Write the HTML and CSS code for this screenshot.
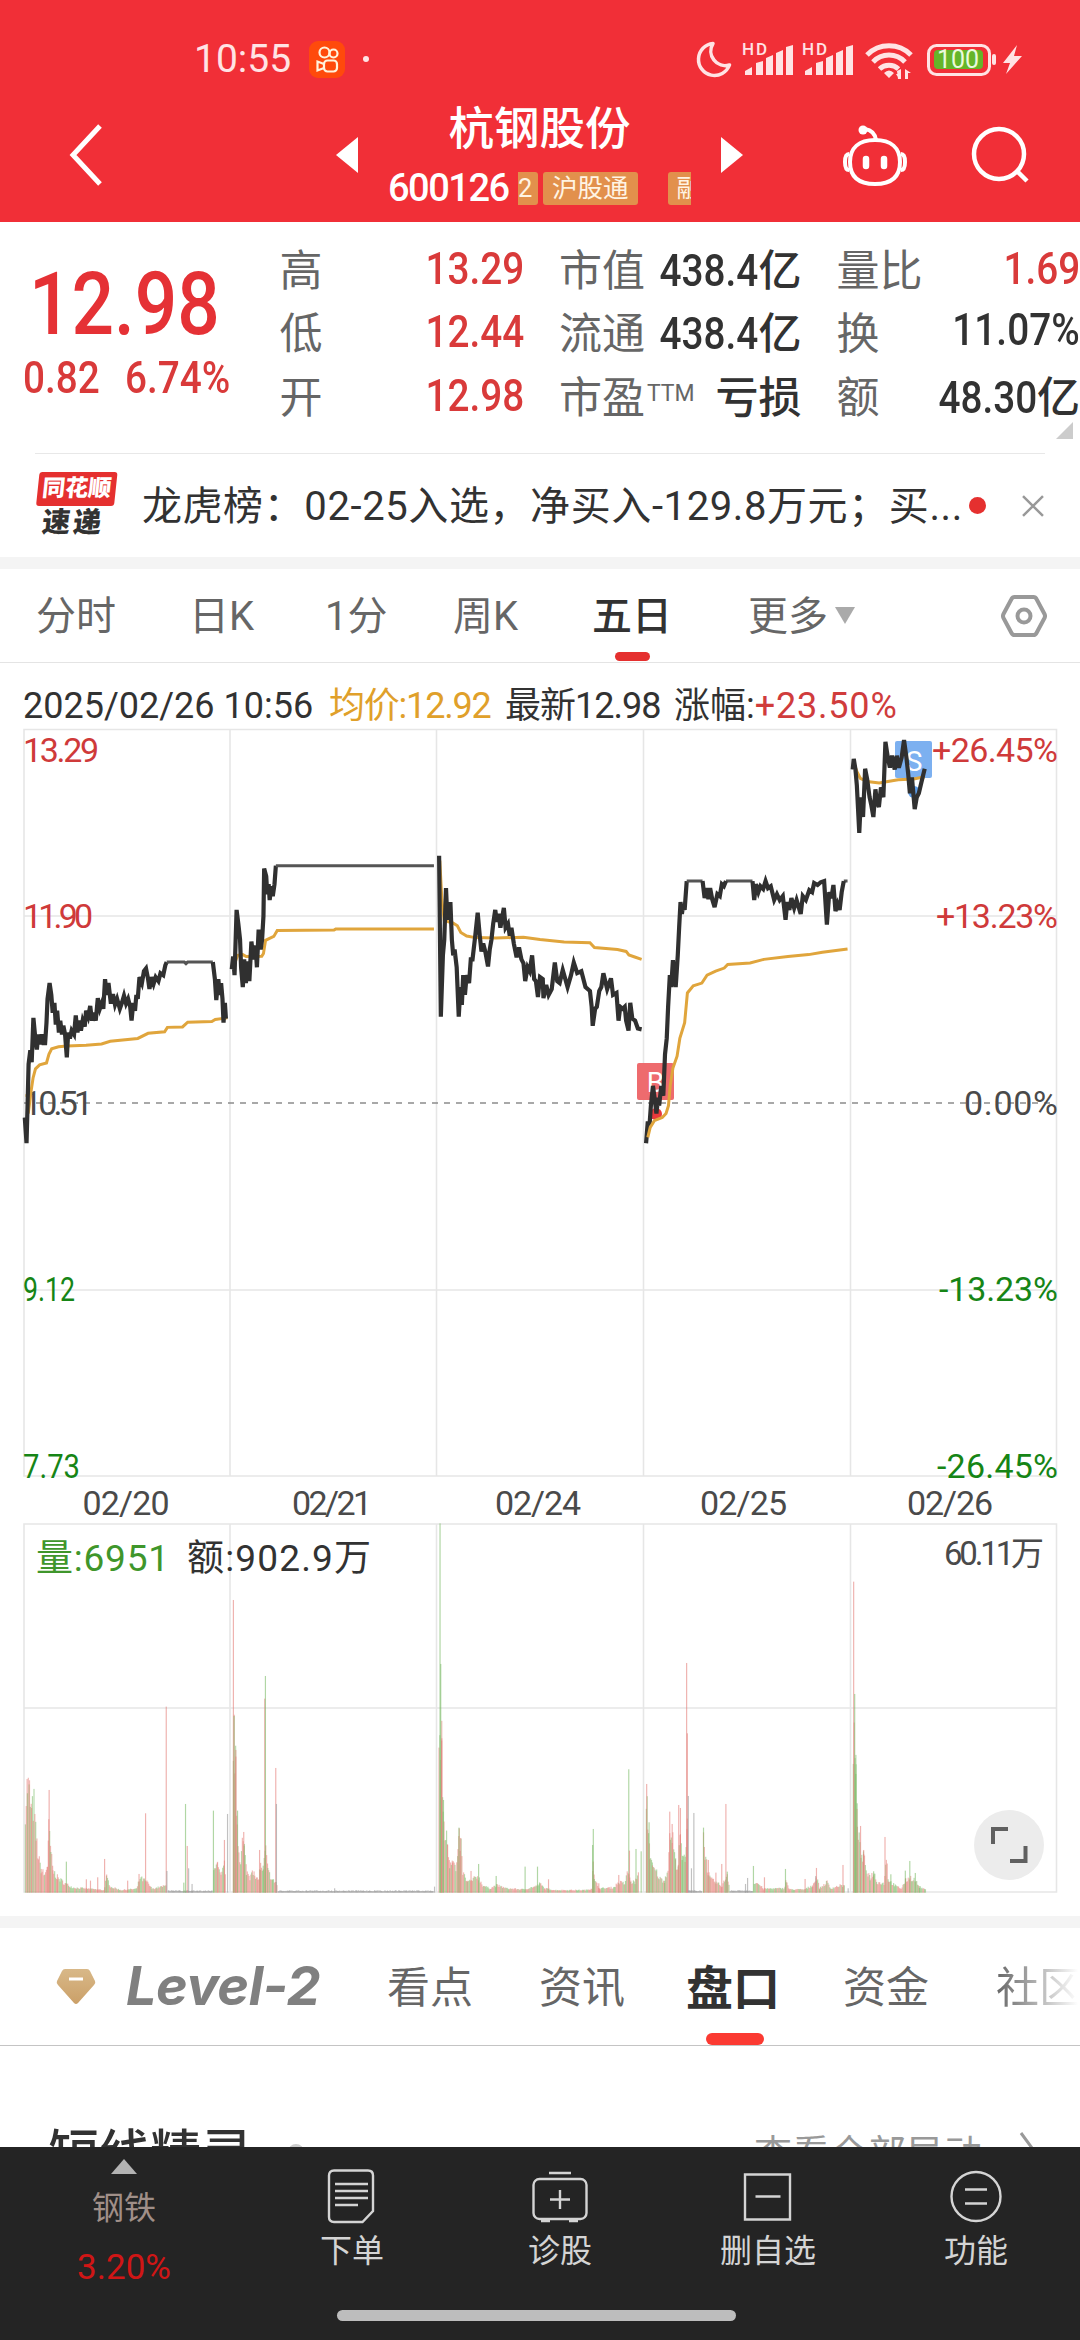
FILE: index.html
```html
<!DOCTYPE html>
<html lang="zh-CN">
<head>
    <meta charset="UTF-8">
    <meta name="viewport" content="width=device-width, initial-scale=1.0">
    <title>杭钢股份 600126</title>
    <link rel="stylesheet" href="styles.css">
</head>
<body>
    <header class="header">
        <div class="status-bar">
            <span class="clock">10:55</span>
            <svg class="app-icon" width="36" height="37" viewBox="0 0 36 37">
                <rect width="36" height="37" rx="9" fill="#ff4a0c"/>
                <g fill="none" stroke="#fff3dc" stroke-width="2.2">
                    <circle cx="15.5" cy="11.5" r="5"/>
                    <circle cx="24.5" cy="12.5" r="4"/>
                    <rect x="15" y="19.5" width="13" height="11" rx="3.5"/>
                    <path d="M15 23l-6.500-2.500v9l6.500-2.500"/>
                </g>
            </svg>
            <span class="dot"></span>
            <svg class="status-icons" width="330" height="42" viewBox="696 38 330 42" fill="#ffe3e4">
                <path d="M713 43.500a16 16 0 1 0 16.500 21.500a14.500 14.500 0 0 1-16.500-21.500z" fill="none" stroke="#ffe3e4" stroke-width="3.500" stroke-linejoin="round"/>
                <g id="signal">
                    <text class="hd" x="742" y="55" textLength="25">HD</text>
                    <path d="M745 75v-4l7-4v8zM756 75V63l7-2v14zM766 75V58l7-3v20zM776 75V53l7-3v25zM786 75V47l7-2v30z"/>
                </g>
                <use href="#signal" x="60"/>
                <g fill="none" stroke="#ffe3e4" stroke-width="5">
                    <path d="M867 55a31 31 0 0 1 44 0M873 62a22 22 0 0 1 32 0M879.500 69a14 14 0 0 1 19 0"/>
                </g>
                <path d="M884 73q5-5 10 0l-5 5zM897 71l4-2v10h-3zM905 79V69l6 4h-3v6zM896 74h3v5z"/>
                <rect x="928.500" y="45.500" width="61" height="29" rx="8" fill="none" stroke="#ffe3e4" stroke-width="3"/>
                <rect x="934" y="50" width="49" height="19" rx="4" fill="#65b529"/>
                <text class="battery" x="937" y="68" textLength="42">100</text>
                <rect x="992" y="54" width="4" height="11" rx="2"/>
                <path d="M1017 45l-14 18h7l-4 11 16-18h-8z"/>
            </svg>
        </div>
        <div class="title-bar">
            <svg class="back" width="34" height="64" viewBox="0 0 34 64"><path d="M31 3L4 32l27 29" fill="none" stroke="#fff" stroke-width="5"/></svg>
            <svg width="22" height="36" viewBox="0 0 22 36"><path d="M22 0v36L0 18z" fill="#fff"/></svg>
            <div class="stock">
                <h1>杭钢股份</h1>
                <div class="stock-sub">
                    <span class="code">600126</span>
                    <div class="tags"><span class="tag tag-cut">2</span><span class="tag">沪股通</span><span class="tag tag-last">融</span></div>
                </div>
            </div>
            <svg width="22" height="36" viewBox="0 0 22 36"><path d="M0 0v36l22-18z" fill="#fff"/></svg>
            <svg class="robot" width="66" height="62" viewBox="0 0 66 62" fill="none" stroke="#fff" stroke-width="4">
                <path d="M34 16c-1-7-5-10-11-11"/>
                <circle cx="21" cy="6" r="4.500" fill="#fff" stroke="none"/>
                <path d="M33 16c16 0 25 8 25 22 0 15-9 22-25 22S8 53 8 38C8 24 17 16 33 16z"/>
                <path d="M7 30q-4 0-4 8t4 8M59 30q4 0 4 8t-4 8"/>
                <path d="M24 35v7M42 35v7" stroke-width="6.500" stroke-linecap="round"/>
            </svg>
            <svg class="search" width="60" height="60" viewBox="0 0 60 60" fill="none" stroke="#fff" stroke-width="4.500"><circle cx="29" cy="29" r="25"/><path d="M47 46l10 10"/></svg>
        </div>
    </header>

    <section class="quote">
        <div class="price-box">
            <div class="price num">12.98</div>
            <div class="change"><span class="num">0.82</span><span class="num">6.74%</span></div>
        </div>
        <dl class="stats stats-a">
            <div><dt>高</dt><dd class="up"><span class="num">13.29</span></dd></div>
            <div><dt>低</dt><dd class="up"><span class="num">12.44</span></dd></div>
            <div><dt>开</dt><dd class="up"><span class="num">12.98</span></dd></div>
        </dl>
        <dl class="stats stats-b">
            <div><dt>市值</dt><dd><span class="num">438.4</span>亿</dd></div>
            <div><dt>流通</dt><dd><span class="num">438.4</span>亿</dd></div>
            <div><dt>市盈<sup>TTM</sup></dt><dd>亏损</dd></div>
        </dl>
        <dl class="stats stats-c">
            <div><dt>量比</dt><dd class="up"><span class="num">1.69</span></dd></div>
            <div><dt>换</dt><dd><span class="num">11.07%</span></dd></div>
            <div><dt>额</dt><dd><span class="num">48.30</span>亿</dd></div>
        </dl>
        <span class="expand-corner"></span>
    </section>

    <section class="news">
        <div class="news-logo"><b class="logo-top">同花顺</b><b class="logo-bottom">速递</b></div>
        <p>龙虎榜：02-25入选，净买入-129.8万元；买...</p>
        <span class="news-dot"></span>
        <svg width="24" height="24" viewBox="0 0 24 24"><path d="M2 2l20 20M22 2L2 22" stroke="#999" stroke-width="2.500"/></svg>
    </section>

    <nav class="period-tabs">
        <a>分时</a>
        <a>日K</a>
        <a>1分</a>
        <a>周K</a>
        <a class="active">五日</a>
        <a>更多<i class="caret"></i></a>
        <svg width="46" height="44" viewBox="0 0 46 44" fill="none" stroke="#999" stroke-width="4"><path d="M13.500 3h19q2 0 3 2l8 15q1 2 0 4l-8 15q-1 2-3 2h-19q-2 0-3-2l-8-15q-1-2 0-4l8-15q1-2 3-2z"/><circle cx="23" cy="22" r="6.500"/></svg>
    </nav>

    <section class="chart">
        <div class="chart-info">
            <span class="t-date">2025/02/26 10:56</span>
            <span class="t-avg">均价:12.92</span>
            <span class="t-last">最新12.98</span>
            <span class="t-rise">涨幅:<em>+23.50%</em></span>
        </div>
        <svg class="plot" width="1080" height="1188" viewBox="0 728 1080 1188">
            <!-- grid -->
            <g class="grid">
                <path d="M24 729.500H1056.500V1476H24zM24 916H1056M24 1290H1056"/>
                <path d="M230 729V1476M436.500 729V1476M643.500 729V1476M850.500 729V1476"/>
                <path d="M24 1524H1056.500V1892H24zM24 1708H1056"/>
                <path d="M230 1524V1892M436.500 1524V1892M643.500 1524V1892M850.500 1524V1892"/>
            </g>
            <path class="zero" d="M24 1103H1056"/>

            <g class="axis up">
                <text x="23" y="762" textLength="76">13.29</text>
                <text x="23" y="928" textLength="70">11.90</text>
                <text x="1058" y="762" text-anchor="end" textLength="126">+26.45%</text>
                <text x="1058" y="928" text-anchor="end" textLength="122">+13.23%</text>
            </g>
            <g class="axis">
                <text x="23" y="1115" textLength="70">10.51</text>
                <text x="1058" y="1115" text-anchor="end" textLength="94">0.00%</text>
            </g>
            <g class="axis down">
                <text x="23" y="1301" textLength="52" lengthAdjust="spacingAndGlyphs">9.12</text>
                <text x="23" y="1478" textLength="57" lengthAdjust="spacingAndGlyphs">7.73</text>
                <text x="1058" y="1301" text-anchor="end" textLength="119">-13.23%</text>
                <text x="1058" y="1478" text-anchor="end" textLength="121">-26.45%</text>
            </g>

            <!-- trade markers -->
            <g class="marker">
                <rect x="637" y="1063" width="37" height="37" rx="2" fill="#ee6b6e"/>
                <circle cx="656" cy="1114" r="6" fill="#e9393c"/>
                <text x="655.500" y="1092" text-anchor="middle">B</text>
                <rect x="895" y="741" width="37" height="37" rx="2" fill="#7cb0f0"/>
                <circle cx="914" cy="792" r="6" fill="#5d9de9"/>
                <text x="914" y="771" text-anchor="middle">S</text>
            </g>

            <!-- average and price lines -->
            <g transform="translate(0 560) scale(.3444 .3954)">
                <path class="avg" d="M82 1400L90 1345 96 1310 103 1287 115 1277 135 1272 142 1250 150 1236 170 1231 195 1229 250 1227 295 1224 320 1217 400 1210 430 1197 478 1193 486 1182 530 1181 545 1169 615 1167 625 1162 660 1158"/>
                <path class="avg" d="M677 1030L690 1000 705 998 715 1003 760 1002 765 995 771 962 795 952 805 937 970 936 975 933 1260 933"/>
                <path class="avg" d="M1277 760L1283 860 1290 912 1315 918 1328 925 1338 942 1355 951 1380 955 1440 956 1520 954 1568 960 1638 966 1713 968 1726 980 1793 985 1818 990 1826 999 1843 1004 1863 1010"/>
                <path class="price-line" d="M72 1410L77 1475 80 1380 83 1275 88 1240 92 1270 97 1158 102 1205 107 1238 111 1200 116 1225 121 1200 126 1222 131 1222 135 1170 138 1110 144 1070 149 1100 153 1145 158 1120 162 1175 166 1140 171 1195 175 1165 180 1200 184 1178 189 1200 194 1258 198 1195 203 1210 208 1190 215 1200 220 1152 225 1195 230 1165 235 1190 240 1165 246 1180 250 1140 256 1155 262 1128 267 1165 272 1145 278 1165 284 1108 290 1135 296 1120 300 1135 305 1060 310 1100 315 1070 322 1122 328 1098 334 1125 340 1110 348 1135 354 1120 360 1102 366 1122 372 1110 378 1130 382 1165 387 1120 392 1140 396 1100 400 1110 405 1055 412 1070 418 1040 424 1033 430 1060 434 1085 440 1055 446 1072 452 1055 460 1065 466 1045 474 1050 480 1025 484 1017"/>
                <path class="price-line flat" d="M484 1017H535L540 1021 545 1017H618"/>
                <path class="price-line" d="M618 1017L624 1060 628 1113 634 1060 638 1100 642 1070 646 1110 649 1170 653 1120 656 1160"/>
                <path class="price-line" d="M673 1035L677 1003 681 1050 687 885 692 920 697 960 700 1030 705 1080 709 1010 714 1070 718 1015 724 1065 730 965 736 1010 742 975 746 1030 751 935 757 985 761 960 765 900 767 780 773 800 776 845 780 820 783 860 788 825 792 850 797 820 801 773"/>
                <path class="price-line flat" d="M801 773H1260"/>
                <path class="price-line" d="M1275 748L1280 1155 1286 1000 1290 960 1295 830 1299 910 1303 870 1308 870 1312 960 1316 1000 1320 985 1326 1030 1332 1155 1337 1080 1341 1125 1345 1050 1350 1100 1355 1050 1362 1070 1367 1010 1372 1010 1380 950 1387 892 1393 950 1398 990 1403 970 1409 990 1417 1028 1422 985 1427 960 1432 920 1438 885 1443 915 1448 895 1453 930 1463 880 1468 930 1475 920 1480 950 1485 930 1492 970 1500 1005 1507 980 1514 1010 1520 1020 1525 1065 1532 1030 1538 1040 1545 1000 1551 1060 1556 1065 1562 1105 1568 1055 1576 1060 1578 1108 1586 1075 1593 1100 1602 1085 1611 1018 1618 1065 1625 1070 1634 1037 1648 1080 1658 1050 1666 1018 1676 1045 1688 1040 1700 1080 1713 1090 1718 1130 1721 1178 1728 1135 1733 1130 1740 1090 1746 1080 1752 1045 1763 1085 1774 1058 1780 1100 1790 1095 1796 1165 1801 1130 1808 1135 1814 1130 1818 1165 1825 1190 1830 1120 1836 1160 1844 1165 1852 1185 1863 1187"/>
            </g>
            <g transform="translate(540 560) scale(.3444 .3954)">
                <path class="price-line" d="M308 1475L313 1420 318 1430 322 1380 328 1330 334 1370 338 1400 343 1360 346 1380 352 1330 358 1355 363 1250 368 1210 372 1130 377 1050 381 1080 386 1012 390 1050 394 1080 400 1000 404 930 408 865 412 895 416 870 420 885 426 812"/>
                <path class="avg" d="M313 1460L320 1435 332 1418 355 1410 366 1400 373 1380 378 1330 386 1285 398 1255 406 1210 420 1170 428 1095 445 1077 470 1070 485 1050 510 1040 535 1032 545 1023 610 1019 650 1010 720 1003 780 998 820 992 893 984"/>
                <path class="avg" d="M912 515L920 535 930 552 950 560 985 564 1010 560 1040 556 1085 554 1117 548"/>
                <path class="price-line flat" d="M426 812H472M540 812H617M882 812H893"/>
                <path class="price-line" d="M472 812L478 855 484 830 489 858 494 830 500 858 507 878 515 845 522 850 528 820 534 825 540 812M617 812L622 860 627 820 634 840 640 825 648 832 655 812 662 830 670 825 680 860 688 845 696 860 705 850 713 910 718 865 724 885 730 855 738 880 745 860 757 895 763 850 772 860 782 835 790 840 796 817 806 822 815 815 825 812 833 922 840 840 846 855 852 822 858 888 864 870 870 885 876 840 882 812"/>
                <path class="price-line" d="M908 530L911 503 916 530 920 570 927 690 932 600 938 650 944 528 950 555 957 600 962 620 968 650 974 580 978 610 984 625 990 575 997 600 1003 460 1010 500 1016 525 1022 495 1030 530 1036 495 1042 525 1050 500 1057 455 1064 500 1069 540 1074 590 1080 550 1088 630 1094 600 1100 590 1108 560 1117 528"/>
            </g>

            <g class="dates" text-anchor="middle">
                <text x="126" y="1515" textLength="87">02/20</text>
                <text x="332" y="1515" textLength="80">02/21</text>
                <text x="538" y="1515" textLength="86">02/24</text>
                <text x="743.500" y="1515" textLength="87">02/25</text>
                <text x="950" y="1515" textLength="86">02/26</text>
            </g>

            <g id="volume" transform="translate(0 1440) scale(.3444 .3333)"></g>

            <g class="vol-info">
                <text class="vol-amount" x="36" y="1571" textLength="133">量:6951</text>
                <text x="187" y="1571" textLength="184">额:902.9万</text>
                <text class="vol-max" x="944" y="1565" textLength="100">60.11万</text>
            </g>

            <circle cx="1009" cy="1845" r="35" fill="#ececec"/>
            <path d="M993 1844V1829H1008M1010 1861H1025.500V1846" fill="none" stroke="#606060" stroke-width="4"/>
        </svg>
    </section>

    <nav class="info-tabs">
        <svg width="40" height="36" viewBox="0 0 40 36"><defs><linearGradient id="gold" x2="0" y2="1"><stop stop-color="#d8b888"/><stop offset="1" stop-color="#cba068"/></linearGradient></defs><path d="M9 0h22q2 0 3 2l5 10q1 2-1 4L22 34q-2 2-4 0L2 16q-2-2-1-4L6 2q1-2 3-2z" fill="url(#gold)"/><path d="M13 10h14" stroke="#fff" stroke-width="3"/></svg>
        <a class="level2">Level-2</a>
        <a>看点</a>
        <a>资讯</a>
        <a class="active">盘口</a>
        <a>资金</a>
        <a class="fade">社区</a>
    </nav>

    <section class="panel">
        <h2>短线精灵</h2>
        <span class="panel-dot"></span>
        <a class="more">查看全部异动</a>
        <svg width="16" height="32" viewBox="0 0 16 32"><path d="M2 1l11 15L2 31" fill="none" stroke="#999" stroke-width="3"/></svg>
    </section>

    <footer class="bottom-bar">
        <div class="index-item">
            <svg width="26" height="15" viewBox="0 0 26 15"><path d="M13 0l13 15H0z" fill="#b3b3b3"/></svg>
            <span class="index-name">钢铁</span>
            <span class="index-rise">3.20%</span>
        </div>
        <div class="item">
            <svg width="56" height="56" viewBox="0 0 56 56"><path d="M10 2.500h34q5 0 5 5V43L38.500 54H10q-5 0-5-5V7.500q0-5 5-5z"/><path d="M11 16h33M11 23h33M11 30h33M11 37h23"/></svg>
            <span>下单</span>
        </div>
        <div class="item">
            <svg width="56" height="56" viewBox="0 0 56 56"><rect x="1.500" y="11" width="53" height="40" rx="6"/><path d="M17 5h22M28 22v19M18 31.500h20M9 53h9M37 53h9"/></svg>
            <span>诊股</span>
        </div>
        <div class="item">
            <svg width="56" height="56" viewBox="0 0 56 56"><path d="M5 6.500h45v45H5zM15.500 28.500h25"/></svg>
            <span>删自选</span>
        </div>
        <div class="item">
            <svg width="56" height="56" viewBox="0 0 56 56"><circle cx="28" cy="28.500" r="24.500"/><path d="M17 21.500h22M17 35.500h22"/></svg>
            <span>功能</span>
        </div>
        <span class="home-bar"></span>
    </footer>
    <script src="volume.js"></script>
</body>
</html>
```
FILE: styles.css
```css
* {
    box-sizing: border-box;
}
body {
    margin: 0;
    width: 1080px;
    height: 2340px;
    overflow: hidden;
    display: flex;
    flex-direction: column;
    font-family: Roboto, "Noto Sans CJK SC", sans-serif;
    color: #323232;
    background-color: #fff;
}
h1, h2, p, dl, dd {
    margin: 0;
}
svg {
    display: block;
}
.num {
    display: inline-block;
    transform: scaleX(0.88);
    transform-origin: right center;
    font-weight: 500;
}

/* header */
.header {
    height: 222px;
    background-color: #f12f37;
    color: #fff;
}
.status-bar {
    display: flex;
    align-items: center;
    height: 92px;
    padding: 26px 54px 0 194px;
}
.clock {
    width: 115px;
    font-size: 39px;
    color: #ffe3e4;
}
.dot {
    width: 6px;
    height: 6px;
    margin-left: 18px;
    border-radius: 50%;
    background-color: #ffe3e4;
}
.status-icons {
    margin-left: auto;
}
.hd {
    font-size: 17px;
    font-weight: 500;
}
.battery {
    font-size: 25px;
    fill: #eafadc;
}
.title-bar {
    display: grid;
    grid-template-columns: 336px 22px 363px 22px 99px 66px 62px 60px;
    align-items: center;
    height: 126px;
}
.back {
    margin-left: 69px;
}
.robot {
    grid-column: 6;
}
.search {
    grid-column: 8;
}
.stock {
    display: flex;
    flex-direction: column;
    align-items: center;
}
.stock h1 {
    font-size: 45.5px;
    line-height: 60px;
    font-weight: 500;
}
.stock-sub {
    display: flex;
    align-items: center;
    width: 303px;
    height: 44px;
    margin-top: 6px;
}
.code {
    width: 130px;
    font-size: 38px;
    font-weight: 500;
    letter-spacing: -1.5px;
}
.tags {
    display: flex;
    width: 173px;
    overflow: hidden;
}
.tag {
    flex: none;
    height: 33px;
    padding: 0 9px;
    margin-right: 5px;
    border-radius: 3px;
    background-color: #e2904c;
    color: #fff4e4;
    font-size: 25.5px;
    line-height: 32px;
}
.tag-cut {
    width: 20px;
    padding: 0;
    border-radius: 0 3px 3px 0;
}
.tag-last {
    margin-left: 25px;
}

/* quote numbers */
.quote {
    position: relative;
    display: flex;
    height: 231px;
    padding-top: 13px;
}
.price-box {
    width: 280px;
    color: #e53135;
}
.price {
    height: 100px;
    margin: 33px 0 0 29px;
    font-size: 87px;
    line-height: 72px;
    transform: scaleX(0.86);
    transform-origin: left center;
}
.change {
    display: flex;
    gap: 15px;
    margin: -16px 0 0 23px;
    font-size: 44px;
    color: #d93a3a;
}
.change .num {
    transform-origin: left center;
}
.stats > div {
    display: flex;
    justify-content: space-between;
    align-items: center;
    height: 63.5px;
    font-size: 43px;
    white-space: nowrap;
}
.stats-a {
    width: 245px;
}
.stats-b {
    width: 243px;
    margin-left: 35px;
}
.stats-c {
    width: 244px;
    margin-left: 35px;
}
.stats dt {
    color: #666;
}
.stats dd {
    font-weight: 500;
}
.stats .num {
    font-size: 44px;
}
.stats dd.up {
    padding-top: 4px;
    color: #d93a3a;
}
.stats sup {
    margin-left: 2px;
    font-size: 23px;
    vertical-align: 12px;
    line-height: 0;
}
.expand-corner {
    position: absolute;
    right: 7px;
    bottom: 14px;
    border-left: 17px solid transparent;
    border-bottom: 17px solid #ccc;
}

/* news strip */
.news {
    display: flex;
    align-items: center;
    height: 104px;
    margin: 0 35px;
    border-top: 1px solid #e8e8e8;
}
.news-logo {
    display: flex;
    flex-direction: column;
    align-items: center;
    width: 80px;
    margin-right: 27px;
    transform: skewX(-6deg);
}
.logo-top {
    width: 78px;
    border-radius: 3px;
    background-color: #e5302f;
    color: #fff;
    font-size: 23px;
    line-height: 34px;
    text-align: center;
    font-weight: 900;
}
.logo-bottom {
    font-size: 28px;
    line-height: 34px;
    font-weight: 900;
    letter-spacing: 3px;
}
.news p {
    width: 828px;
    margin-top: -6px;
    font-size: 40px;
    letter-spacing: 0.6px;
    white-space: nowrap;
}
.news-dot {
    width: 17px;
    height: 17px;
    margin-right: 35px;
    border-radius: 50%;
    background-color: #e5302f;
}

/* chart period tabs */
.period-tabs {
    display: grid;
    grid-template-columns: 153px 136px 128px 139px 156px 253px 46px;
    align-items: center;
    height: 106px;
    padding-left: 36px;
    border-top: 12px solid #f4f4f4;
    border-bottom: 1px solid #e4e4e4;
    font-size: 40px;
    color: #666;
}
.period-tabs a {
    display: flex;
    align-items: center;
    margin-top: -5px;
}
.period-tabs .active {
    position: relative;
    color: #323232;
    font-weight: 500;
}
.period-tabs .active::after {
    content: "";
    position: absolute;
    left: 23px;
    bottom: -19px;
    width: 35px;
    height: 9px;
    border-radius: 5px;
    background-color: #e5302f;
}
.caret {
    margin: 5px 0 0 7px;
    border: 10px solid transparent;
    border-top: 17px solid #aaa;
    border-bottom: 0;
}

/* chart */
.chart {
    height: 1253px;
}
.chart-info {
    display: flex;
    align-items: baseline;
    height: 65px;
    padding: 18px 0 0 23px;
    font-size: 36px;
    line-height: 50px;
    white-space: nowrap;
}
.t-date {
    width: 306px;
    letter-spacing: 0;
}
.t-avg {
    width: 176px;
    letter-spacing: -1.2px;
    color: #e0a02a;
}
.t-last {
    width: 169px;
    letter-spacing: -1px;
}
.t-rise em {
    color: #d03c3c;
    font-style: normal;
    letter-spacing: 0.8px;
}
.grid {
    fill: none;
    stroke: #e6e6e6;
    stroke-width: 1.6;
}
.zero {
    stroke: #8c8c8c;
    stroke-width: 1.5;
    stroke-dasharray: 6 6;
}
.axis {
    font-size: 34px;
    fill: #4a4a4a;
}
.axis.up {
    fill: #cf3a3a;
}
.axis.down {
    fill: #168516;
}
.marker text {
    font-size: 28px;
    fill: #fff;
}
.avg,
.price-line {
    fill: none;
    vector-effect: non-scaling-stroke;
}
.avg {
    stroke: #e0a53c;
    stroke-width: 3;
}
.price-line {
    stroke: #303030;
    stroke-width: 4.2;
}
.price-line.flat {
    stroke: #555;
    stroke-width: 3;
}
.dates {
    font-size: 34px;
    fill: #4a4a4a;
}
.vol-info {
    font-size: 37px;
    fill: #323232;
}
.vol-amount {
    fill: #3f962b;
}
.vol-max {
    font-size: 33px;
    fill: #4a4a4a;
}
.bar-up {
    fill: #e57f79;
}
.bar-down {
    fill: #7cbb68;
}
.bar-flat {
    fill: #989898;
}

/* info tabs */
.info-tabs {
    display: grid;
    grid-template-columns: 70px 261px 152px 147px 157px 153px 90px;
    align-items: center;
    height: 130px;
    padding-left: 56px;
    border-top: 12px solid #f4f4f4;
    border-bottom: 1px solid #c4c4c4;
    font-size: 43px;
    color: #666;
    white-space: nowrap;
}
.info-tabs a {
    margin-top: -5px;
}
.info-tabs .level2 {
    margin-top: -2px;
    font-family: Inter, Roboto, sans-serif;
    font-size: 54px;
    font-weight: 700;
    font-style: italic;
    letter-spacing: -0.5px;
    color: #808080;
}
.info-tabs .active {
    position: relative;
    font-size: 47px;
    font-weight: 700;
    color: #323232;
}
.info-tabs .active::after {
    content: "";
    position: absolute;
    left: 20px;
    bottom: -26px;
    width: 58px;
    height: 12px;
    border-radius: 6px;
    background-color: #fb3a32;
}
.fade {
    color: transparent;
    background: linear-gradient(to right, #666, #fff 82px);
    background-clip: text;
    -webkit-background-clip: text;
}

/* panel under the info tabs, cut by the bottom bar */
.panel {
    display: flex;
    height: 101px;
    padding: 75px 45px 0 48px;
    overflow: hidden;
}
.panel h2 {
    font-size: 51px;
    line-height: 68px;
    font-weight: 500;
}
.panel-dot {
    width: 16px;
    height: 16px;
    margin: 23px 0 0 36px;
    border-radius: 50%;
    background-color: #ccc;
}
.more {
    margin-left: auto;
    font-size: 38px;
    line-height: 66px;
    color: #999;
}
.panel svg {
    margin: 11px 0 0 37px;
}

/* bottom bar */
.bottom-bar {
    position: relative;
    display: grid;
    grid-template-columns: 248px 208px 208px 208px 208px;
    height: 193px;
    background-color: #242424;
    color: #d4d4d4;
    font-size: 32px;
}
.index-item,
.item {
    display: flex;
    flex-direction: column;
    align-items: center;
}
.index-item {
    padding-top: 12px;
}
.index-name {
    margin-top: 9px;
    line-height: 50px;
    color: #a08f88;
}
.index-rise {
    margin-top: 12px;
    font-size: 35px;
    line-height: 46px;
    color: #d01616;
}
.item {
    padding-top: 21px;
}
.item svg {
    fill: none;
    stroke: #d4d4d4;
    stroke-width: 2.4;
}
.item span {
    margin-top: 2px;
    line-height: 50px;
}
.home-bar {
    position: absolute;
    left: 337px;
    bottom: 19px;
    width: 399px;
    height: 11px;
    border-radius: 6px;
    background-color: #bdbdbd;
}
```
FILE: volume.js
```js
// minute volume: [x, top] outlines per session, plus single spikes
const BASE = 1358;
const STEP = 2.5;

const sessions = [
    [[72, 1085], [78, 1020], [84, 1045], [90, 1110], [97, 1080], [103, 1185], [110, 1250], [118, 1285], [128, 1305], [136, 1270], [140, 1160], [146, 1230], [152, 1290], [165, 1310], [185, 1328], [210, 1342], [300, 1350], [308, 1310], [320, 1340], [350, 1350], [395, 1346], [405, 1312], [425, 1325], [440, 1346], [482, 1336]],
    [[619, 1270], [630, 1275], [640, 1310], [650, 1270], [655, 1340]],
    [[676, 864], [680, 900], [683, 980], [687, 1140], [692, 1230], [697, 1250], [702, 1200], [708, 1220], [714, 1290], [724, 1310], [731, 1275], [738, 1310], [747, 1320], [755, 1275], [763, 1285], [770, 1220], [776, 1290], [790, 1320], [800, 1325], [804, 1340]],
    [[1273, 900], [1281, 900], [1285, 1110], [1290, 1170], [1298, 1200], [1304, 1265], [1312, 1245], [1322, 1290], [1328, 1240], [1332, 1190], [1337, 1210], [1342, 1295], [1355, 1325], [1370, 1320], [1385, 1305], [1400, 1335], [1420, 1345], [1440, 1335], [1470, 1345], [1520, 1348], [1555, 1338], [1566, 1330], [1580, 1345], [1610, 1350], [1700, 1350], [1717, 1345], [1721, 1240], [1724, 1320], [1740, 1345], [1780, 1342], [1795, 1325], [1812, 1330], [1822, 1290], [1830, 1325], [1842, 1325], [1854, 1300]],
    [[1875, 1045], [1879, 1120], [1885, 1230], [1893, 1280], [1905, 1295], [1915, 1315], [1928, 1320], [1938, 1275], [1945, 1170], [1952, 1190], [1960, 1265], [1968, 1270], [1974, 1180], [1980, 1260], [1988, 1240], [1994, 1120], [1996, 1130]],
    [[2041, 1180], [2045, 1230], [2052, 1280], [2060, 1315], [2075, 1325], [2095, 1338], [2110, 1300], [2116, 1340]],
    [[2188, 1325], [2200, 1330], [2215, 1346], [2245, 1345], [2275, 1345], [2281, 1320], [2290, 1348], [2335, 1348], [2358, 1335], [2370, 1310], [2378, 1345], [2400, 1325], [2410, 1345], [2440, 1335], [2452, 1338]],
    [[2476, 870], [2481, 900], [2484, 1010], [2488, 1110], [2493, 1200], [2498, 1240], [2506, 1250], [2516, 1290], [2525, 1310], [2536, 1295], [2545, 1325], [2565, 1330], [2572, 1240], [2578, 1320], [2600, 1338], [2615, 1345], [2628, 1320], [2640, 1310], [2655, 1318], [2668, 1340], [2688, 1350]]
];

const flats = [[487, 615], [806, 1258], [1998, 2038], [2118, 2184]];

const spikes = [
    [142, 1050, 'up'], [192, 1265, 'down'], [250, 1318, 'up'], [262, 1322, 'up'], [283, 1312, 'up'], [303, 1257, 'up'],
    [370, 1322, 'up'], [403, 1302, 'up'], [422, 1120, 'up'], [482, 800, 'up'], [484, 1293, 'flat'], [533, 1328, 'down'],
    [538, 1092, 'down'], [543, 1218, 'up'], [547, 1285, 'flat'], [557, 1332, 'flat'], [619, 1112, 'down'],
    [651, 1200, 'up'], [660, 1122, 'flat'], [677, 480, 'up'], [679, 828, 'down'], [684, 950, 'up'], [689, 1112, 'down'],
    [707, 1176, 'up'], [753, 1230, 'up'], [768, 776, 'up'], [770, 708, 'down'], [800, 984, 'up'], [802, 1092, 'flat'],
    [971, 1345, 'flat'], [1261, 1340, 'flat'], [1277, 250, 'down'], [1279, 672, 'down'], [1282, 895, 'up'],
    [1287, 1080, 'down'], [1332, 1163, 'down'], [1337, 1194, 'up'], [1367, 1293, 'up'], [1389, 1272, 'down'],
    [1440, 1308, 'down'], [1524, 1280, 'down'], [1560, 1280, 'down'], [1592, 1318, 'up'], [1720, 1215, 'down'],
    [1722, 1167, 'down'], [1738, 1330, 'up'], [1796, 1305, 'up'], [1825, 988, 'down'], [1827, 1232, 'up'],
    [1846, 1227, 'down'], [1861, 1234, 'down'], [1877, 1032, 'up'], [1884, 1147, 'down'], [1944, 1115, 'up'],
    [1951, 1152, 'up'], [1970, 1095, 'up'], [1975, 1104, 'up'], [1993, 669, 'up'], [1995, 880, 'up'], [1998, 1068, 'flat'],
    [2007, 1285, 'flat'], [2014, 1119, 'flat'], [2042, 1163, 'down'], [2056, 1260, 'up'], [2078, 1298, 'up'],
    [2095, 1272, 'up'], [2107, 1092, 'up'], [2111, 1295, 'down'], [2164, 1332, 'flat'], [2170, 1314, 'flat'],
    [2187, 1278, 'down'], [2219, 1312, 'up'], [2280, 1287, 'down'], [2337, 1317, 'up'], [2368, 1308, 'flat'],
    [2370, 1284, 'up'], [2447, 1275, 'up'], [2462, 1345, 'flat'], [2478, 425, 'up'], [2481, 762, 'down'],
    [2484, 1002, 'down'], [2488, 1090, 'down'], [2498, 1158, 'up'], [2507, 1230, 'up'], [2536, 1294, 'down'],
    [2569, 1191, 'up'], [2586, 1303, 'down'], [2628, 1292, 'down'], [2641, 1263, 'down'], [2657, 1299, 'down']
];

const volume = document.getElementById('volume');
let seed = 7;

function rand() {
    seed = (seed * 16807) % 2147483647;
    return seed / 2147483647;
}

function bar(x, top, tone, opacity) {
    const rect = document.createElementNS('http://www.w3.org/2000/svg', 'rect');
    rect.setAttribute('x', x);
    rect.setAttribute('y', top);
    rect.setAttribute('width', 3.4);
    rect.setAttribute('height', BASE - top);
    rect.setAttribute('class', 'bar-' + tone);
    rect.setAttribute('fill-opacity', opacity);
    volume.appendChild(rect);
}

sessions.forEach(points => {
    for (let i = 0; i < points.length - 1; i++) {
        const [x0, y0] = points[i];
        const [x1, y1] = points[i + 1];
        for (let x = x0; x < x1; x += STEP) {
            const y = y0 + (y1 - y0) * (x - x0) / (x1 - x0);
            const top = BASE - (BASE - y) * (0.75 + rand() * 0.4);
            bar(x, top, rand() < 0.58 ? 'up' : 'down', 0.55);
        }
    }
});

flats.forEach(([from, to]) => {
    for (let x = from; x < to; x += STEP) {
        bar(x, 1351 + rand() * 3, 'flat', 0.7);
    }
});

spikes.forEach(([x, top, tone]) => bar(x - 1, top, tone, 0.6));
```
